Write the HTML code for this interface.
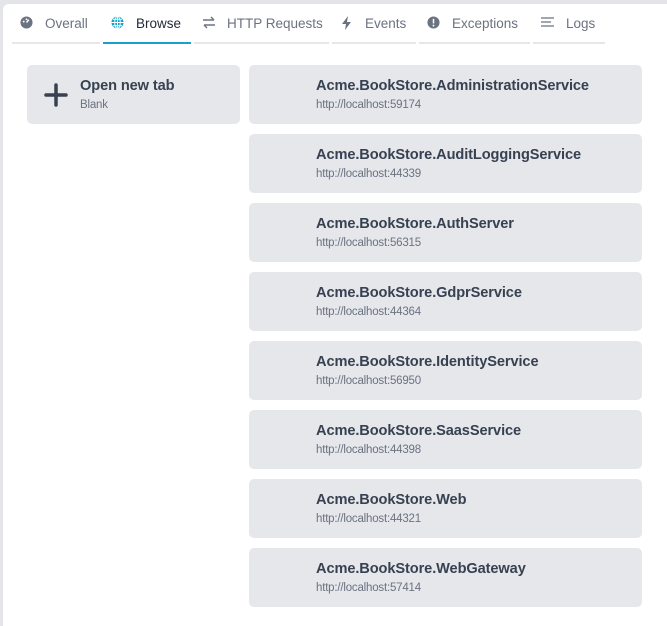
<!DOCTYPE html><html><head><style>
html,body{margin:0;width:667px;height:626px;overflow:hidden}
body{background:#e4e5e9;font-family:"Liberation Sans",sans-serif;position:relative}
.panel{position:absolute;left:3px;top:4px;width:670px;height:630px;background:#fff;border-radius:6px}
.tab{position:absolute;top:0;height:38px;border-bottom:2px solid #e5e7eb;color:#6b7280;font-size:13.5px;line-height:39px;box-sizing:content-box}
.tab svg{position:absolute;top:12px}
.tab span{position:absolute;top:0}
.card{position:absolute;background:#e5e7eb;border-radius:5px}
.t{position:absolute;left:67px;top:13px;font-size:14.6px;font-weight:bold;color:#374151;letter-spacing:-0.1px}
.u{position:absolute;left:67px;top:34px;font-size:11.5px;color:#6b7280;letter-spacing:-0.2px}
</style></head><body>
<div class="panel"></div>
<div class="tab" style="left:12px;width:88px;top:4px"><svg style="left:8px" width="13" height="13" viewBox="0 0 14 14"><circle cx="7" cy="7" r="6.5" fill="#6b7280"/><path d="M7 7L9.5 4" stroke="#fff" stroke-width="1.6"/><circle cx="4" cy="6" r="1" fill="#fff"/><circle cx="7" cy="3.5" r="1" fill="#fff"/></svg><span style="left:33px">Overall</span></div>
<div class="tab" style="left:103px;width:88px;top:4px;border-color:#17a2c8;color:#1f2937"><svg style="left:8px" width="13" height="13" viewBox="0 0 14 14"><circle cx="7" cy="7" r="6.5" fill="#17a2c8"/><path d="M0.5 7H13.5M7 .5V13.5M2 3.5H12M2 10.5H12" stroke="#fff" stroke-width="1"/><ellipse cx="7" cy="7" rx="3" ry="6.5" fill="none" stroke="#fff" stroke-width="1"/></svg><span style="left:33px">Browse</span></div>
<div class="tab" style="left:194px;width:135px;top:4px"><svg style="left:8px" width="14" height="13" viewBox="0 0 14 13"><path d="M1 4H12M9 1L12 4M13 9H2M5 12L2 9" stroke="#6b7280" stroke-width="1.4" fill="none"/></svg><span style="left:33px">HTTP Requests</span></div>
<div class="tab" style="left:332px;width:84px;top:4px"><svg style="left:9px" width="11" height="14" viewBox="0 0 11 14"><path d="M7 0L1 8H5L4 14L10 6H6Z" fill="#6b7280"/></svg><span style="left:33px">Events</span></div>
<div class="tab" style="left:419px;width:111px;top:4px"><svg style="left:8px" width="13" height="13" viewBox="0 0 14 14"><circle cx="7" cy="7" r="6.5" fill="#6b7280"/><rect x="6.2" y="3" width="1.6" height="5" fill="#fff"/><circle cx="7" cy="10.3" r="1" fill="#fff"/></svg><span style="left:33px">Exceptions</span></div>
<div class="tab" style="left:533px;width:72px;top:4px"><svg style="left:8px" width="13" height="12" viewBox="0 0 13 12"><path d="M0 2H13M0 6H10M0 10H13" stroke="#6b7280" stroke-width="1.3"/></svg><span style="left:33px">Logs</span></div>

<div class="card" style="left:27px;top:65px;width:213px;height:59px">
<svg style="position:absolute;left:17px;top:18px" width="24" height="24" viewBox="0 0 24 24"><path d="M12 2V22M2 12H22" stroke="#374151" stroke-width="3.5" stroke-linecap="round"/></svg>
<div class="t" style="left:53px">Open new tab</div><div class="u" style="left:53px">Blank</div></div>

<div class="card" style="left:249px;top:65px;width:393px;height:59px"><div class="t">Acme.BookStore.AdministrationService</div><div class="u">http://localhost:59174</div></div>
<div class="card" style="left:249px;top:134px;width:393px;height:59px"><div class="t">Acme.BookStore.AuditLoggingService</div><div class="u">http://localhost:44339</div></div>
<div class="card" style="left:249px;top:203px;width:393px;height:59px"><div class="t">Acme.BookStore.AuthServer</div><div class="u">http://localhost:56315</div></div>
<div class="card" style="left:249px;top:272px;width:393px;height:59px"><div class="t">Acme.BookStore.GdprService</div><div class="u">http://localhost:44364</div></div>
<div class="card" style="left:249px;top:341px;width:393px;height:59px"><div class="t">Acme.BookStore.IdentityService</div><div class="u">http://localhost:56950</div></div>
<div class="card" style="left:249px;top:410px;width:393px;height:59px"><div class="t">Acme.BookStore.SaasService</div><div class="u">http://localhost:44398</div></div>
<div class="card" style="left:249px;top:479px;width:393px;height:59px"><div class="t">Acme.BookStore.Web</div><div class="u">http://localhost:44321</div></div>
<div class="card" style="left:249px;top:548px;width:393px;height:59px"><div class="t">Acme.BookStore.WebGateway</div><div class="u">http://localhost:57414</div></div>
</body></html>
